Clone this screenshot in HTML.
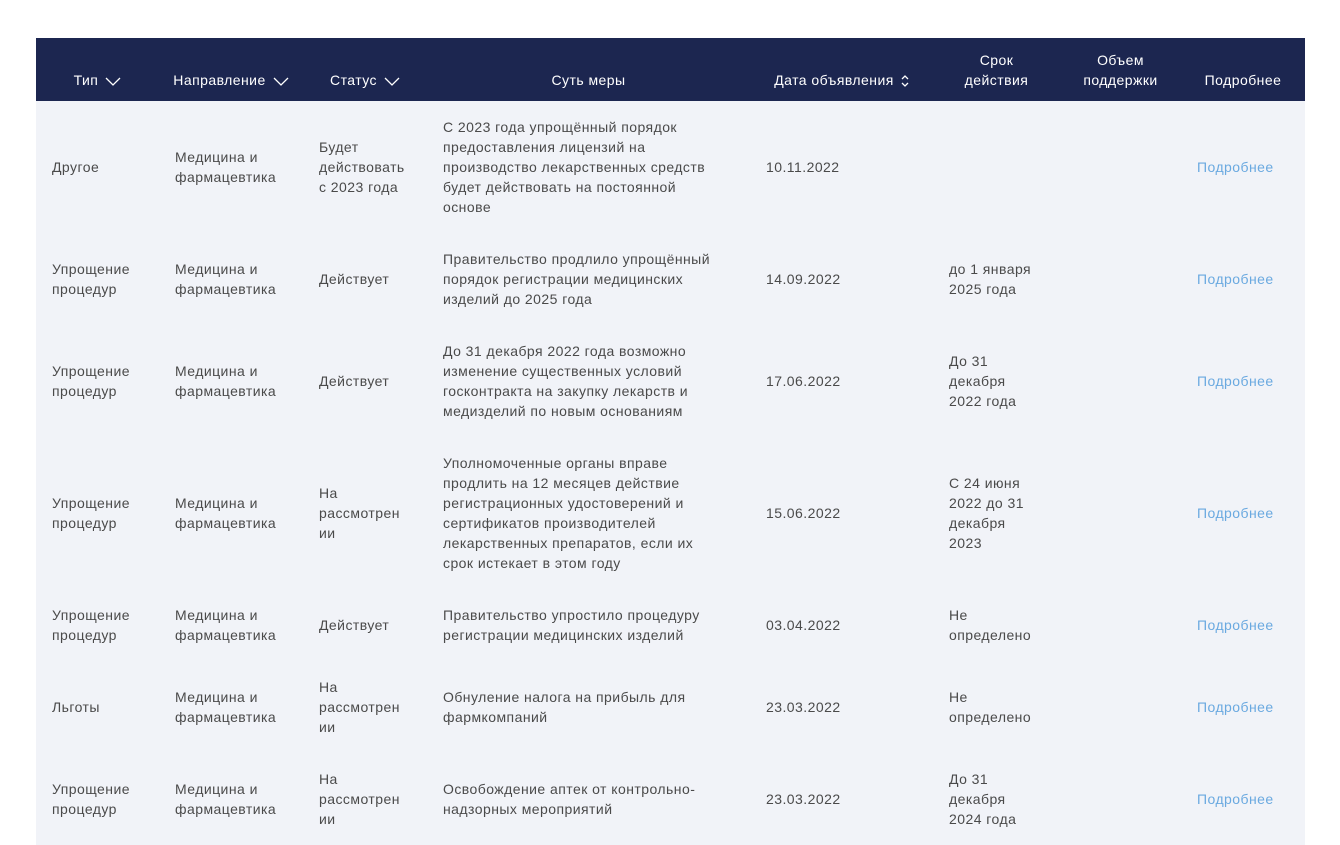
<!DOCTYPE html>
<html><head><meta charset="utf-8"><style>
body{margin:0;background:#fff;width:1340px;height:828px;overflow:hidden;font-family:"Liberation Sans","Noto Sans CJK SC",sans-serif;}
table{position:absolute;left:36px;top:38px;width:1269px;border-collapse:collapse;table-layout:fixed;font-size:14px;line-height:20px;letter-spacing:0.45px;}
th{background:#1c2650;color:#fff;font-weight:normal;height:63px;padding:0 2px 11px;vertical-align:bottom;text-align:center;white-space:nowrap;box-sizing:border-box;}
td{background:#f1f3f8;color:#4a4a4a;padding:16px 4px 16px 16px;vertical-align:middle;white-space:nowrap;}
td.l{color:#6aa9e0}
svg{vertical-align:middle;margin-left:7px}
</style></head><body>
<table>
<colgroup><col style="width:123px"><col style="width:144px"><col style="width:124px"><col style="width:323px"><col style="width:183px"><col style="width:127px"><col style="width:121px"><col style="width:124px"></colgroup>
<tr>
<th>Тип<svg width="16" height="9" viewBox="0 0 16 9"><path d="M1 1l7 7 7-7" fill="none" stroke="#fff" stroke-width="1.3"/></svg></th>
<th>Направление<svg width="16" height="9" viewBox="0 0 16 9"><path d="M1 1l7 7 7-7" fill="none" stroke="#fff" stroke-width="1.3"/></svg></th>
<th>Статус<svg width="16" height="9" viewBox="0 0 16 9"><path d="M1 1l7 7 7-7" fill="none" stroke="#fff" stroke-width="1.3"/></svg></th>
<th>Суть меры</th>
<th>Дата объявления<svg width="8" height="14" viewBox="0 0 8 14"><path d="M1 5l3-3 3 3M1 9l3 3 3-3" fill="none" stroke="#fff" stroke-width="1.3"/></svg></th>
<th>Срок<br>действия</th>
<th>Объем<br>поддержки</th>
<th>Подробнее</th>
</tr>
<tr><td>Другое</td><td>Медицина и<br>фармацевтика</td><td>Будет<br>действовать<br>с 2023 года</td><td>С 2023 года упрощённый порядок<br>предоставления лицензий на<br>производство лекарственных средств<br>будет действовать на постоянной<br>основе</td><td>10.11.2022</td><td></td><td></td><td class="l">Подробнее</td></tr>
<tr><td>Упрощение<br>процедур</td><td>Медицина и<br>фармацевтика</td><td>Действует</td><td>Правительство продлило упрощённый<br>порядок регистрации медицинских<br>изделий до 2025 года</td><td>14.09.2022</td><td>до 1 января<br>2025 года</td><td></td><td class="l">Подробнее</td></tr>
<tr><td>Упрощение<br>процедур</td><td>Медицина и<br>фармацевтика</td><td>Действует</td><td>До 31 декабря 2022 года возможно<br>изменение существенных условий<br>госконтракта на закупку лекарств и<br>медизделий по новым основаниям</td><td>17.06.2022</td><td>До 31<br>декабря<br>2022 года</td><td></td><td class="l">Подробнее</td></tr>
<tr><td>Упрощение<br>процедур</td><td>Медицина и<br>фармацевтика</td><td>На<br>рассмотрен<br>ии</td><td>Уполномоченные органы вправе<br>продлить на 12 месяцев действие<br>регистрационных удостоверений и<br>сертификатов производителей<br>лекарственных препаратов, если их<br>срок истекает в этом году</td><td>15.06.2022</td><td>С 24 июня<br>2022 до 31<br>декабря<br>2023</td><td></td><td class="l">Подробнее</td></tr>
<tr><td>Упрощение<br>процедур</td><td>Медицина и<br>фармацевтика</td><td>Действует</td><td>Правительство упростило процедуру<br>регистрации медицинских изделий</td><td>03.04.2022</td><td>Не<br>определено</td><td></td><td class="l">Подробнее</td></tr>
<tr><td>Льготы</td><td>Медицина и<br>фармацевтика</td><td>На<br>рассмотрен<br>ии</td><td>Обнуление налога на прибыль для<br>фармкомпаний</td><td>23.03.2022</td><td>Не<br>определено</td><td></td><td class="l">Подробнее</td></tr>
<tr><td>Упрощение<br>процедур</td><td>Медицина и<br>фармацевтика</td><td>На<br>рассмотрен<br>ии</td><td>Освобождение аптек от контрольно-<br>надзорных мероприятий</td><td>23.03.2022</td><td>До 31<br>декабря<br>2024 года</td><td></td><td class="l">Подробнее</td></tr>
</table>
</body></html>
